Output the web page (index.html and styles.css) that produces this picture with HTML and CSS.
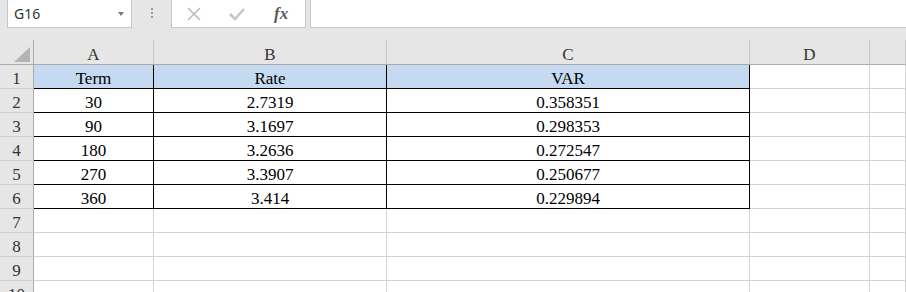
FILE: index.html
```html
<!DOCTYPE html>
<html lang="en">
<head>
  <meta charset="UTF-8">
  <title>Sheet1</title>
  <link rel="stylesheet" href="styles.css">
</head>
<body>

  <div class="toolbar">
    <div class="namebox">
      <span class="ref">G16</span>
      <span class="drop"></span>
    </div>
    <div class="grip">
      <span></span><span></span><span></span>
    </div>
    <div class="fnbox">
      <svg class="ico" width="16" height="16" viewBox="0 0 16 16">
        <path d="M2 2 L14 14 M14 2 L2 14" stroke="#bdbdbd" stroke-width="1.6" fill="none"/>
      </svg>
      <svg class="ico" width="18" height="16" viewBox="0 0 18 16">
        <path d="M2 8 L7 13 L16 3" stroke="#c6c6c6" stroke-width="2.6" fill="none"/>
      </svg>
      <span class="fx">fx</span>
    </div>
    <div class="formula"></div>
  </div>

  <div class="sheet">
    <div class="corner"><span class="tri"></span></div>
    <div class="colhead">A</div>
    <div class="colhead">B</div>
    <div class="colhead">C</div>
    <div class="colhead">D</div>
    <div class="colhead"></div>

    <div class="rowhead">1</div>
    <div class="cell b head">Term</div>
    <div class="cell b head">Rate</div>
    <div class="cell b head">VAR</div>
    <div class="cell"></div>
    <div class="cell"></div>

    <div class="rowhead">2</div>
    <div class="cell b">30</div>
    <div class="cell b">2.7319</div>
    <div class="cell b">0.358351</div>
    <div class="cell"></div>
    <div class="cell"></div>

    <div class="rowhead">3</div>
    <div class="cell b">90</div>
    <div class="cell b">3.1697</div>
    <div class="cell b">0.298353</div>
    <div class="cell"></div>
    <div class="cell"></div>

    <div class="rowhead">4</div>
    <div class="cell b">180</div>
    <div class="cell b">3.2636</div>
    <div class="cell b">0.272547</div>
    <div class="cell"></div>
    <div class="cell"></div>

    <div class="rowhead">5</div>
    <div class="cell b">270</div>
    <div class="cell b">3.3907</div>
    <div class="cell b">0.250677</div>
    <div class="cell"></div>
    <div class="cell"></div>

    <div class="rowhead">6</div>
    <div class="cell b">360</div>
    <div class="cell b">3.414</div>
    <div class="cell b">0.229894</div>
    <div class="cell"></div>
    <div class="cell"></div>

    <div class="rowhead">7</div>
    <div class="cell"></div>
    <div class="cell"></div>
    <div class="cell"></div>
    <div class="cell"></div>
    <div class="cell"></div>

    <div class="rowhead">8</div>
    <div class="cell"></div>
    <div class="cell"></div>
    <div class="cell"></div>
    <div class="cell"></div>
    <div class="cell"></div>

    <div class="rowhead">9</div>
    <div class="cell"></div>
    <div class="cell"></div>
    <div class="cell"></div>
    <div class="cell"></div>
    <div class="cell"></div>

    <div class="rowhead">10</div>
    <div class="cell"></div>
    <div class="cell"></div>
    <div class="cell"></div>
    <div class="cell"></div>
    <div class="cell"></div>
  </div>

</body>
</html>
```

FILE: styles.css
```css
html, body {
  margin: 0;
  padding: 0;
  overflow: hidden;
}
body {
  background: #fff;
  width: 906px;
  height: 292px;
  font-family: 'Liberation Serif', serif;
}
.toolbar {
  display: flex;
  align-items: flex-start;
  height: 40px;
  background: #e6e6e6;
  padding-left: 7px;
  box-sizing: border-box;
}
.namebox {
  width: 125px;
  height: 28px;
  box-sizing: border-box;
  background: #fff;
  border: 1px solid #c6c6c6;
  border-top: none;
  display: flex;
  align-items: center;
  justify-content: space-between;
  padding: 0 6px 0 6px;
}
.ref {
  font-family: 'Noto Sans', sans-serif;
  font-size: 14px;
  color: #333;
}
.drop {
  width: 0;
  height: 0;
  border-left: 3.5px solid transparent;
  border-right: 3.5px solid transparent;
  border-top: 4px solid #7a7a7a;
  margin-right: 1px;
}
.grip {
  width: 39px;
  height: 26px;
  display: flex;
  flex-direction: column;
  align-items: center;
  justify-content: center;
  gap: 2px;
}
.grip span {
  width: 2px;
  height: 2px;
  background: #9a9a9a;
}
.fnbox {
  width: 135px;
  height: 28px;
  box-sizing: border-box;
  background: #fff;
  border: 1px solid #c6c6c6;
  border-top: none;
  display: flex;
  align-items: center;
  padding-left: 14px;
  gap: 26px;
}
.ico {
  display: block;
}
.fx {
  font-family: 'Liberation Serif', serif;
  font-style: italic;
  font-weight: bold;
  font-size: 17px;
  color: #5a5a5a;
  margin-left: 2px;
}
.formula {
  flex: 1;
  height: 28px;
  margin-left: 4px;
  box-sizing: border-box;
  background: #fff;
  border: 1px solid #c6c6c6;
  border-top: none;
  border-right: none;
}
.sheet {
  display: grid;
  grid-template-columns: 34px 120px 233px 363px 120px 1fr;
  grid-template-rows: 25px repeat(10, 24px);
}
.sheet > div {
  box-sizing: border-box;
  display: flex;
  align-items: flex-end;
  justify-content: center;
  line-height: 17px;
  font-size: 17px;
  padding-bottom: 1px;
}
.corner {
  background: #e6e6e6;
  border-right: 1px solid #ababab;
  border-bottom: 1px solid #ababab;
  position: relative;
}
.tri {
  position: absolute;
  right: 3px;
  bottom: 2px;
  width: 0;
  height: 0;
  border-left: 16px solid transparent;
  border-bottom: 15px solid #b4b4b4;
}
.colhead {
  background: #e6e6e6;
  border-right: 1px solid #c8c8c8;
  border-bottom: 1px solid #ababab;
  color: #333;
  font-size: 16px;
}
.rowhead {
  background: #e6e6e6;
  border-right: 1px solid #ababab;
  border-bottom: 1px solid #d0d0d0;
  color: #333;
}
.cell {
  border-right: 1px solid #d4d4d4;
  border-bottom: 1px solid #d4d4d4;
  color: #000;
}
.cell.b {
  border-right-color: #000;
  border-bottom-color: #000;
}
.cell.head {
  background: #c5d9f1;
}
```
